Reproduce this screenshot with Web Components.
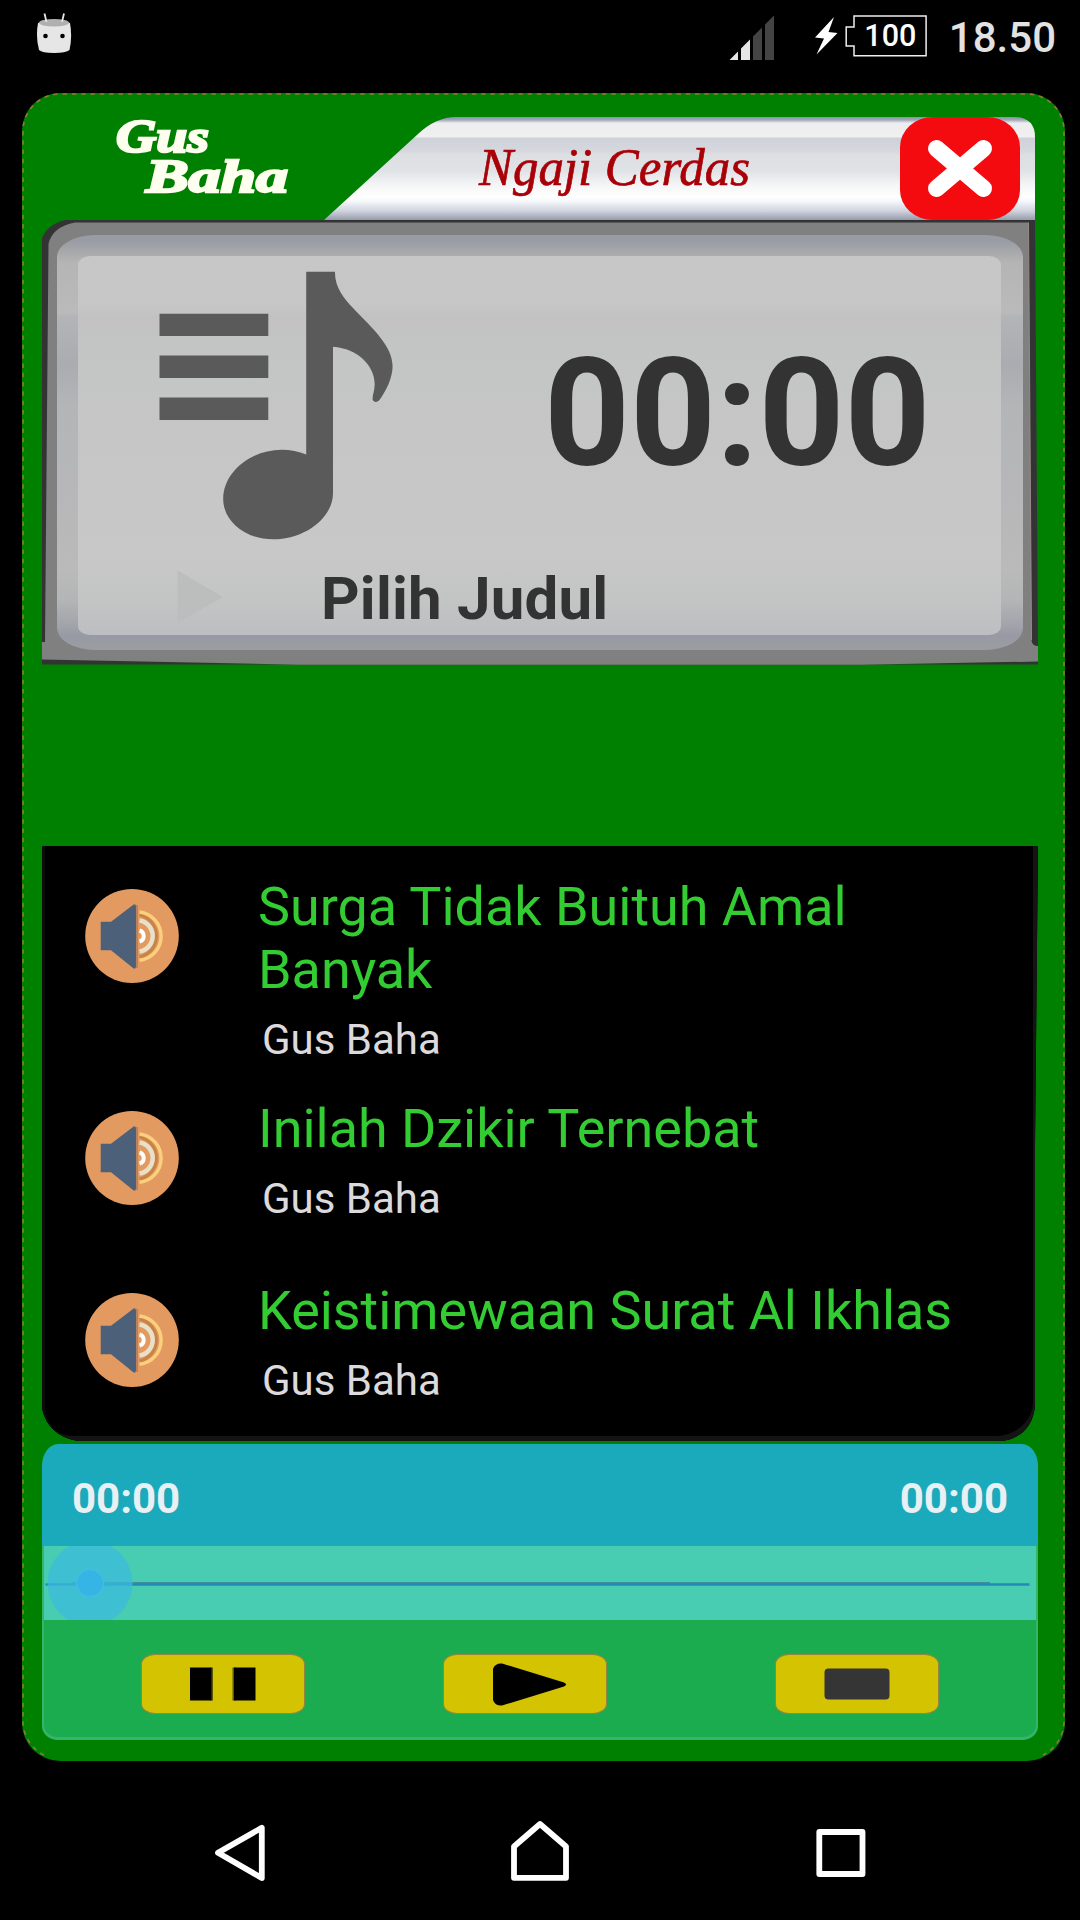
<!DOCTYPE html>
<html lang="id">
<head>
<meta charset="UTF-8">
<title>Ngaji Cerdas</title>
<style>
    body {
        margin: 0;
        width: 1080px;
        height: 1920px;
        overflow: hidden;
        background-color: #000;
        font-family: Roboto, "Liberation Sans", sans-serif;
    }
</style>
</head>
<body>
    <phone-screen>
        <status-bar slot="status">
            <span slot="battery">100</span>
            <span slot="clock">18.50</span>
        </status-bar>
        <player-card>
            <player-header></player-header>
            <player-display>
                <span slot="time">00:00</span>
                <span slot="title">Pilih Judul</span>
            </player-display>
            <track-list>
                <track-item style="height:222px">
                    <span slot="title">Surga Tidak Buituh Amal Banyak</span>
                    <span slot="artist">Gus Baha</span>
                </track-item>
                <track-item style="height:182px">
                    <span slot="title">Inilah Dzikir Ternebat</span>
                    <span slot="artist">Gus Baha</span>
                </track-item>
                <track-item>
                    <span slot="title">Keistimewaan Surat Al Ikhlas</span>
                    <span slot="artist">Gus Baha</span>
                </track-item>
            </track-list>
            <player-controls>
                <span slot="elapsed">00:00</span>
                <span slot="total">00:00</span>
            </player-controls>
        </player-card>
        <nav-bar slot="nav"></nav-bar>
    </phone-screen>

<script>
class BaseElement extends HTMLElement {
    constructor() {
        super();
        this.attachShadow({ mode: "open" });
    }
    render() {
        const template = document.createElement("template");
        template.innerHTML = `${this.getStyle()}${this.getTemplate()}`;
        this.shadowRoot.replaceChildren(template.content.cloneNode(true));
    }
    connectedCallback() {
        this.render();
    }
}

class PhoneScreen extends BaseElement {
    getTemplate() {
        return /*html */`
            <slot name="status"></slot>
            <slot></slot>
            <slot name="nav"></slot>
        `;
    }
    getStyle() {
        return /*html */`
        <style>
            :host {
                display: flex;
                flex-direction: column;
                width: 1080px;
                height: 1920px;
                background-color: #000;
            }
        </style>
        `;
    }
}

class StatusBar extends BaseElement {
    getTemplate() {
        return /*html */`
            <svg class="robot" width="36" height="42" viewBox="36 12 36 42">
                <path d="M38 23Q54 17 70 23Q72.500 37 69.500 50Q66 53 54 53Q42 53 39 50Q35.500 37 38 23Z" fill="#e6e6e6"/>
                <ellipse cx="54" cy="22.800" rx="15" ry="3.800" fill="#b0b0b0"/>
                <path d="M44.500 13.500L46.500 22M64 13.500L62 22" stroke="#e6e6e6" stroke-width="1.800"/>
                <circle cx="45.500" cy="36" r="2.300"/>
                <circle cx="62.500" cy="36" r="2.300"/>
            </svg>
            <svg class="signal" width="46" height="46" viewBox="729 15 46 46">
                <path d="M729.500 60L738 51.500V60ZM741 60V48.500L750 39.500V60Z" fill="#e6e6e6"/>
                <path d="M753 60V36.500L762 27.500V60ZM765 60V24.500L774 15.500V60Z" fill="#444"/>
            </svg>
            <svg class="bolt" width="24" height="38" viewBox="814 17 24 38">
                <path d="M834 17L815 37.500L824 38.500L816.500 54.500L837.500 33L828.500 32Z" fill="#fff"/>
            </svg>
            <div class="battery">
                <svg width="82" height="42" viewBox="0 0 82 42">
                    <path d="M9 .9H81.100V40.700H9V31.100H1.200V11.900H9Z" fill="none" stroke="#eee" stroke-width="1.500"/>
                </svg>
                <b><slot name="battery"></slot></b>
            </div>
            <div class="clock"><slot name="clock"></slot></div>
        `;
    }
    getStyle() {
        return /*html */`
        <style>
            :host {
                display: flex;
                flex: none;
                align-items: flex-start;
                box-sizing: border-box;
                height: 93px;
                padding: 12px 24px 0 36px;
            }
            svg { display: block; flex: none; }
            .signal { margin: 3px 39px 0 auto; }
            .bolt { margin: 5px 7px 0 0; }
            .battery {
                display: grid;
                width: 82px;
                margin-top: 3px;
            }
            .battery > * { grid-area: 1 / 1; }
            .battery b {
                padding-left: 9px;
                font-weight: 500;
                font-size: 30.500px;
                line-height: 41px;
                text-align: center;
                color: #fff;
            }
            .clock {
                margin: 1px 0 0 22px;
                font-weight: 500;
                font-size: 42px;
                line-height: 49px;
                color: #e2e2e2;
            }
        </style>
        `;
    }
}

class PlayerCard extends BaseElement {
    getTemplate() {
        return /*html */`
            <svg class="outline" width="1043" height="1668">
                <path d="M22 1662A38 38 0 0 1 1 1626V38A37 37 0 0 1 38 1H1005A37 37 0 0 1 1042 38V1626A38 38 0 0 1 1021 1662"
                    fill="none" stroke="#8a7a3c" stroke-width="1.600" stroke-dasharray="4.500 4.800"/>
            </svg>
            <slot></slot>
        `;
    }
    getStyle() {
        return /*html */`
        <style>
            :host {
                position: relative;
                display: flex;
                flex: none;
                flex-direction: column;
                box-sizing: border-box;
                width: 1043px;
                height: 1668px;
                margin-left: 22px;
                padding: 24px 27px 0 20px;
                border-radius: 38px;
                background-color: #008000;
            }
            .outline {
                position: absolute;
                inset: 0;
            }
        </style>
        `;
    }
}

class PlayerHeader extends BaseElement {
    getTemplate() {
        return /*html */`
            <svg class="brand" width="282" height="103" viewBox="42 117 282 103">
                <text x="116" y="152" textLength="93" lengthAdjust="spacingAndGlyphs">Gus</text>
                <text x="146" y="192" textLength="142" lengthAdjust="spacingAndGlyphs">Baha</text>
            </svg>
            <div class="banner">
                <svg class="title" width="300" height="80" viewBox="470 130 300 80">
                    <text x="479" y="184.500" textLength="271" lengthAdjust="spacingAndGlyphs">Ngaji Cerdas</text>
                </svg>
                <button>
                    <svg width="120" height="103" viewBox="900 117 120 103">
                        <path d="M936.500 148.500L983.500 188.500M983.500 148.500L936.500 188.500" stroke="#fff" stroke-width="17" stroke-linecap="round"/>
                    </svg>
                </button>
            </div>
        `;
    }
    getStyle() {
        return /*html */`
        <style>
            :host {
                display: flex;
                width: 993px;
                height: 103px;
                flex: none;
            }
            svg { display: block; }
            .brand { overflow: visible; }
            .brand text {
                font: italic bold 47px "Liberation Serif", serif;
                fill: #fffff0;
                stroke: #fffff0;
                stroke-width: 2.400px;
            }
            .banner {
                display: flex;
                box-sizing: border-box;
                width: 711px;
                padding: 0 15px 0 146px;
                clip-path: path("M0 103L94 17Q112 0 132 0H689Q711 0 711 20V103Z");
                background: linear-gradient(#8992a8 0, #a3a9b8 3px, #ededef 6px, #f0f0f1 20px, #ced1d8 21px,
                    #d5d8dd 34px, #dddfe2 38px, #e0e3e6 54px, #f4f5f6 68px, #fff 80px, #f6f8fb 84px, #cfd3de 94px, #959baa 103px);
            }
            .title { margin-top: 13px; }
            .title text {
                font: italic 53px "Liberation Serif", serif;
                fill: #a90008;
                stroke: #a90008;
                stroke-width: .7px;
            }
            button {
                margin: 0 0 0 auto;
                padding: 0;
                border: 0;
                border-radius: 33px / 30px;
                background-color: #f30b10;
            }
        </style>
        `;
    }
}

class PlayerDisplay extends BaseElement {
    getTemplate() {
        return /*html */`
            <svg class="frame" width="996" height="445" viewBox="42 220 996 445">
                <path d="M42 238Q48 224 65 220H1035L1038 642V664.500H42Z" fill="#333335"/>
                <path d="M45 642L48.500 244Q52 227 75 222.500H1028.500L1031.500 640Q1032 646 1038 646V661.500L860 664.700H300L42 659.500V642Z" fill="#808080"/>
                <path d="M1028.500 222.500L1031.500 640" stroke="#998a85" fill="none"/>
            </svg>
            <div class="bezel">
                <div class="screen">
                    <svg class="note" width="236" height="270" viewBox="158 270 236 270">
                        <path d="M159.500 313.700H268.300V336H159.500ZM159.500 355.500H268.300V378H159.500ZM159.500 397.500H268.300V420H159.500Z"/>
                        <path d="M306.200 271.700H335C334.500 287 344 299 353 308C373 329 392.600 346 392.600 366C392.600 378 386 391 379.500 400Q375.500 404 372.700 400C372 396 374.700 391 374.700 384C374.700 366 358 348.500 333 346.700V493C333 518 305 539.300 273 539.300C245 539.300 223.200 521 223.200 499C223.200 472 251 449.700 281.700 449.700Q295 449.700 306.200 454.500Z"/>
                    </svg>
                    <div class="time"><slot name="time"></slot></div>
                    <svg class="play" width="46" height="54" viewBox="177 570 46 54">
                        <path d="M177.500 570.500L223 597L177.500 623Z" fill="#bcbdbd"/>
                    </svg>
                    <div class="name"><slot name="title"></slot></div>
                </div>
            </div>
        `;
    }
    getStyle() {
        return /*html */`
        <style>
            :host {
                display: grid;
                flex: none;
                width: 996px;
                height: 445px;
            }
            .frame, .bezel { grid-area: 1 / 1; }
            svg { display: block; }
            .bezel {
                z-index: 1;
                box-sizing: border-box;
                width: 966px;
                height: 415px;
                margin: 15px 0 0 15px;
                padding: 21px 22px 15px 21px;
                border-radius: 38px / 22px;
                background: linear-gradient(#999ca5 0, #999ca5 6px, #acadad 21px, #b5b5b5 28px, #bababa 77px, #b3b4b6 82px,
                    #abacb1 130px, #b3b5b6 170px, #b7b7b9 260px, #bababa 335px, #b3b5b6 365px, #a1a4aa 390px, #979aa4 401px, #9c9da1 415px);
            }
            .screen {
                display: grid;
                grid-template-columns: 80px 165px 149px 1fr;
                grid-template-rows: 301px 78px;
                height: 379px;
                border-radius: 12px / 9px;
                background: linear-gradient(#c7c7c7 0, #c6c6c6 50px, #c2c2c2 60px, #c4c5c5 110px, #c6c6c6 195px, #c8c8c8 300px, #c3c4c4 345px, #bdbec2 379px);
            }
            .note {
                grid-area: 1 / 2;
                margin-top: 14px;
                fill: #5a5a5a;
            }
            .time {
                grid-area: 1 / 4;
                margin: 70px 0 0 72px;
                font-weight: bold;
                font-size: 150px;
                line-height: 176px;
                color: #333;
            }
            .play {
                grid-area: 2 / 2;
                margin: 13px 0 0 19px;
            }
            .name {
                grid-area: 2 / 3 / 3 / 5;
                margin: 7px 0 0 -2px;
                font-weight: bold;
                font-size: 60px;
                line-height: 70px;
                letter-spacing: .2px;
                color: #333;
            }
        </style>
        `;
    }
}

class TrackList extends BaseElement {
    getTemplate() {
        return /*html */`
            <slot></slot>
        `;
    }
    getStyle() {
        return /*html */`
        <style>
            :host {
                display: flex;
                flex: none;
                flex-direction: column;
                box-sizing: border-box;
                width: 996px;
                height: 595px;
                margin-top: 181px;
                padding: 28px 0 0 43px;
                clip-path: path("M0 0H996L993 300V560Q990 589 962 595H35Q6 589 0 563Z");
                border-radius: 0 0 38px 38px / 0 0 34px 34px;
                box-shadow: inset -5px -5px #151315, inset 3px 0 #0c0c0e;
                background-color: #000;
            }
        </style>
        `;
    }
}

class TrackItem extends BaseElement {
    getTemplate() {
        return /*html */`
            <svg width="94" height="96" viewBox="0 0 94 96">
                <ellipse cx="47" cy="48" rx="46.800" ry="47" fill="#e39a60"/>
                <path d="M15.700 33.700H26L48 17Q51 15 51 19V78Q51 82 48 80L26 62.300H15.700Z" fill="#4c607a"/>
                <path d="M52 17V80" stroke="#a87a60" stroke-width="1.500"/>
                <g fill="none">
                    <path d="M54.500 27A21.500 21.500 0 0 1 54.500 69" stroke="#c68448" stroke-width="3"/>
                    <path d="M54.500 24A24.300 24.300 0 0 1 54.500 72.300" stroke="#fccf7e" stroke-width="3.400"/>
                    <path d="M54.500 32.500A15.700 15.700 0 0 1 54.500 63.500" stroke="#e8e0c8" stroke-width="4.500"/>
                    <path d="M54.500 42.500A5.700 5.700 0 0 1 54.500 53.500" stroke="#fff" stroke-width="4"/>
                </g>
            </svg>
            <div class="text">
                <div class="title"><slot name="title"></slot></div>
                <div class="artist"><slot name="artist"></slot></div>
            </div>
        `;
    }
    getStyle() {
        return /*html */`
        <style>
            :host {
                display: flex;
                flex: none;
                gap: 79px;
            }
            svg { flex: none; margin-top: 14px; }
            .text { width: 720px; padding-top: 1px; }
            .title {
                width: 710px;
                font-size: 53.900px;
                line-height: 63px;
                color: #33cc33;
            }
            .artist {
                margin: 14px 0 0 4px;
                font-size: 42px;
                line-height: 49px;
                color: #dcdadc;
            }
        </style>
        `;
    }
}

class PlayerControls extends BaseElement {
    getTemplate() {
        return /*html */`
            <div class="times">
                <slot name="elapsed"></slot>
                <slot name="total"></slot>
            </div>
            <svg class="seek" width="992" height="74" viewBox="44 1546 992 74">
                <path d="M44 1546H1036V1620H44Z" fill="#48cdb2"/>
                <path d="M72 1583H990" stroke="#3f8e9d" stroke-width="2"/>
                <path d="M45.500 1584.500H1029.500" stroke="#2589b8" stroke-width="2.500"/>
                <circle cx="90" cy="1583.300" r="42.500" fill="#3cb9dc" fill-opacity=".75"/>
                <circle cx="90" cy="1583" r="13.500" fill="#37b4e6" stroke="#41bedf" stroke-width="1.500"/>
            </svg>
            <div class="buttons">
                <control-button>
                    <svg width="66" height="34" viewBox="0 0 66 34">
                        <path d="M20 .5H23V33.500H20ZM42.500 .5H46V33.500H42.500Z" fill="#5d5600"/>
                        <path d="M0 .5H21.500V33.500H0ZM44 .5H65.500V33.500H44Z"/>
                    </svg>
                </control-button>
                <control-button style="margin-left:138px">
                    <svg width="76" height="44" viewBox="487 1662 76 44">
                        <path d="M493 1669Q495 1663 502 1663.500L564 1682.500Q568 1684.500 564 1686.500L502 1705.500Q495 1706 493 1700Z"/>
                    </svg>
                </control-button>
                <control-button style="margin-left:168px">
                    <svg width="66" height="32" viewBox="0 0 66 32">
                        <rect x=".5" y=".5" width="65" height="31" rx="4" fill="#353535"/>
                    </svg>
                </control-button>
            </div>
        `;
    }
    getStyle() {
        return /*html */`
        <style>
            :host {
                display: flex;
                flex: none;
                flex-direction: column;
                box-sizing: border-box;
                width: 996px;
                height: 296px;
                margin-top: 3px;
                padding: 0 2px 3px;
                overflow: hidden;
                border-radius: 16px / 22px 22px 14px 14px;
                background: linear-gradient(#1aaabb 102px, #34b56b 102px);
            }
            .times {
                display: flex;
                justify-content: space-between;
                align-items: center;
                box-sizing: border-box;
                flex: none;
                height: 102px;
                padding: 7px 28px 0;
                font-weight: bold;
                font-size: 42px;
                color: #e9f0f3;
            }
            .seek { display: block; flex: none; }
            .buttons {
                display: flex;
                flex: 1;
                padding: 34px 0 0 96.500px;
                border-radius: 0 0 14px 14px / 0 0 12px 12px;
                background-color: #1aac4e;
            }
        </style>
        `;
    }
}

class ControlButton extends BaseElement {
    getTemplate() {
        return /*html */`
            <slot></slot>
        `;
    }
    getStyle() {
        return /*html */`
        <style>
            :host {
                display: flex;
                align-items: center;
                justify-content: center;
                box-sizing: border-box;
                width: 164px;
                height: 60px;
                border: 1px solid #948540;
                border-radius: 14px / 10px;
                background-color: #d4c300;
            }
            ::slotted(svg) { overflow: visible; }
        </style>
        `;
    }
}

class NavBar extends BaseElement {
    getTemplate() {
        return /*html */`
            <svg width="50" height="56" viewBox="215 1825 50 56">
                <path d="M218 1852.800L261.800 1827.800V1878Z"/>
            </svg>
            <svg width="58" height="60" viewBox="512 1821 58 60">
                <path d="M514 1877.800V1846.500L540 1824L566 1846.500V1877.800Z"/>
            </svg>
            <svg width="50" height="48" viewBox="815.500 1829 50 48">
                <path d="M818.800 1832H862V1874H818.800Z"/>
            </svg>
        `;
    }
    getStyle() {
        return /*html */`
        <style>
            :host {
                display: flex;
                flex: 1;
                align-items: center;
                justify-content: space-between;
                padding: 25px 214px 0 215px;
            }
            svg {
                overflow: visible;
                fill: none;
                stroke: #fff;
                stroke-width: 5.800px;
                stroke-linejoin: round;
            }
            svg:nth-of-type(2) { margin: -4px 0 0 0; }
        </style>
        `;
    }
}

customElements.define("phone-screen", PhoneScreen);
customElements.define("status-bar", StatusBar);
customElements.define("player-card", PlayerCard);
customElements.define("player-header", PlayerHeader);
customElements.define("player-display", PlayerDisplay);
customElements.define("track-list", TrackList);
customElements.define("track-item", TrackItem);
customElements.define("player-controls", PlayerControls);
customElements.define("control-button", ControlButton);
customElements.define("nav-bar", NavBar);
</script>
</body>
</html>
